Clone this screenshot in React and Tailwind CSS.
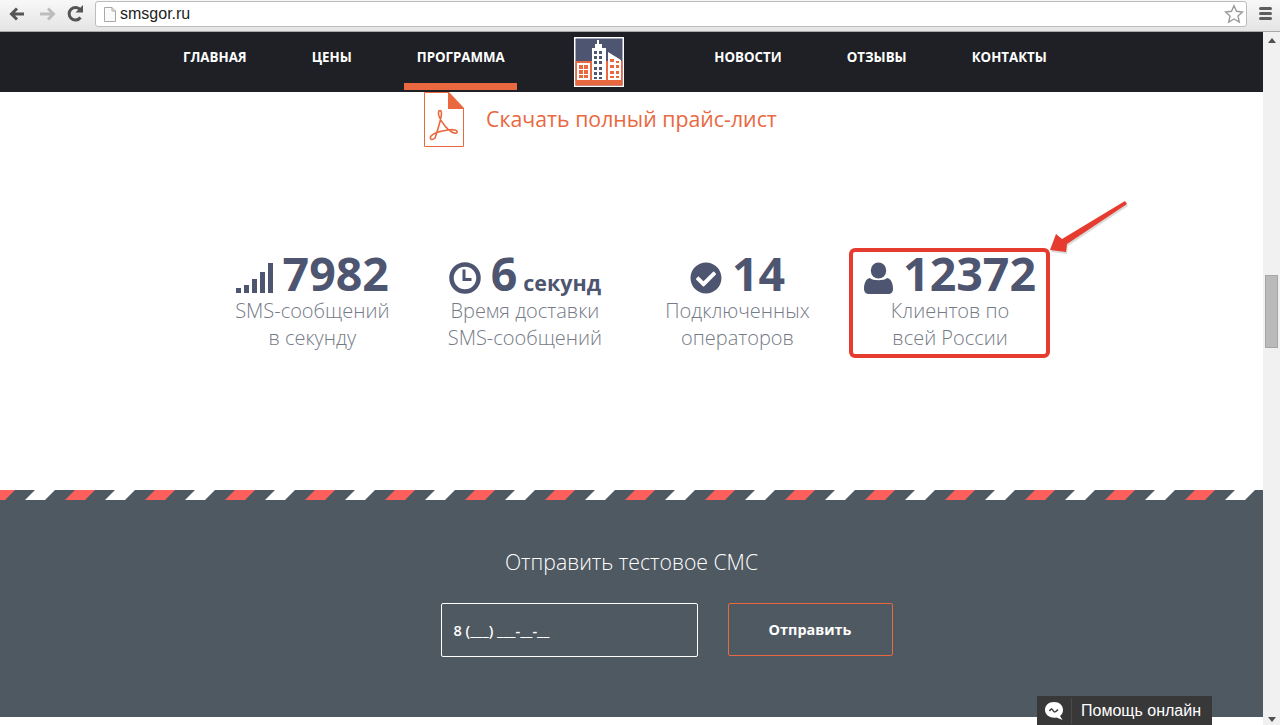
import { FaCheckCircle } from "react-icons/fa";

function Toolbar() {
  return (
    <div className="flex h-8 items-start border-b border-[#a9a9a9] bg-gradient-to-b from-[#f8f8f8] to-[#e4e4e4]">
      <div className="flex h-[26px] w-[95px] items-center">
        <svg width="95" height="26" viewBox="0 0 95 26" fill="none">
          <path d="M24 14H12M17 8.5L11.5 14L17 19.5" stroke="#555" strokeWidth="3" />
          <path d="M40 14H53M48 8.5L53.5 14L48 19.5" stroke="#bdbdbd" strokeWidth="3" />
          <path d="M80.5 17.5A6.3 6.3 0 1 1 80.5 10" stroke="#555" strokeWidth="3" />
          <path d="M75.5 12.5L83 12.5L83 5Z" fill="#555" />
        </svg>
      </div>
      <div className="mt-px flex h-[26px] w-[1152px] items-center rounded-[3px] border border-[#bcbcbc] bg-white pl-[7px] pr-[2px]">
        <svg width="14" height="17" viewBox="0 0 14 17" fill="none">
          <path d="M1.5 1.5H9L12.5 5V15.5H1.5Z" fill="#fafafa" stroke="#a8a8a8" />
          <path d="M9 1.5V5H12.5" stroke="#a8a8a8" />
        </svg>
        <span className="ml-[3px] font-['Liberation_Sans',sans-serif] text-base leading-none text-[#222]">smsgor.ru</span>
        <svg className="ml-auto" width="20" height="20" viewBox="0 0 20 20" fill="none">
          <path d="M10 1.8L12.5 7.3L18.5 8L14 12L15.3 18L10 15L4.7 18L6 12L1.5 8L7.5 7.3Z" fill="#fff" stroke="#9a9a9a" strokeWidth="1.4" />
        </svg>
      </div>
      <div className="ml-[12px] mt-[7px] flex w-[13px] flex-col gap-[2px]">
        <div className="h-[3px] rounded-sm bg-[#5e5e5e]" />
        <div className="h-[3px] rounded-sm bg-[#5e5e5e]" />
        <div className="h-[3px] rounded-sm bg-[#5e5e5e]" />
      </div>
    </div>
  );
}

function NavLink({ label, active }) {
  return (
    <a
      className={
        "flex h-[58px] items-center self-start border-b-[7px] px-[12.5px] text-[13.3px] font-bold uppercase text-white " +
        (active ? "border-[#e9683f]" : "border-transparent")
      }
    >
      {label}
    </a>
  );
}

function Logo() {
  return (
    <svg className="shrink-0" width="50" height="50" viewBox="0 0 50 50">
      <rect width="50" height="50" fill="#fff" />
      <rect x="1.5" y="1.5" width="47" height="47" fill="#4d5570" />
      <rect x="1.5" y="24" width="47" height="24.5" fill="#e9683f" />
      <rect x="3" y="26" width="13" height="17" fill="#fff" />
      <path d="M5 28h4v4H5zM10 28h4v4h-4zM5 33h4v4H5zM10 33h4v4h-4zM5 38h4v3H5zM10 38h4v3h-4z" fill="#e9683f" />
      <path d="M18 11H21V7H23V3H25V7H28V11H32V43H18Z" fill="#fff" />
      <path d="M20 14h3v3h-3zM25 14h3v3h-3zM20 19h3v3h-3zM25 19h3v3h-3zM20 24h3v3h-3zM25 24h3v3h-3zM20 30h3v3h-3zM25 30h3v3h-3zM20 35h3v3h-3zM25 35h3v3h-3zM20 40h3v2h-3zM25 40h3v2h-3z" fill="#4d5570" />
      <path d="M34 15L47 23V43H34Z" fill="#fff" />
      <path d="M36 22h4v3h-4zM42 24h3v2h-3zM36 28h4v3h-4zM42 28h3v3h-3zM36 34h4v3h-4zM42 34h3v3h-3zM36 39h4v2h-4zM42 39h3v2h-3z" fill="#e9683f" />
    </svg>
  );
}

function PdfIcon() {
  return (
    <svg className="shrink-0" width="41" height="55" viewBox="0 0 41 55" fill="none">
      <path d="M24 0.5H0.5V54.5H39.5V16" stroke="#e9683f" />
      <path d="M24 0H25L40 16V17H24Z" fill="#e9683f" />
      <path
        d="M11 46C8 49 5 47 7 44C10 41 16 39 24 38C29 37 34 38 33 40.500C31 43 25 39 21 34C17 29 14 23 14.500 20C15 18 17.500 18 17.500 21C17.500 26 14 37 11 46Z"
        stroke="#e9683f"
        strokeWidth="1.6"
      />
    </svg>
  );
}

function SignalIcon() {
  return (
    <svg width="37" height="32" viewBox="0 0 37 32" fill="#4d5570">
      <rect x="0" y="26" width="5" height="5" />
      <rect x="8" y="23" width="5" height="8" />
      <rect x="16" y="17" width="5" height="14" />
      <rect x="24" y="10" width="5" height="21" />
      <rect x="32" y="1" width="5" height="30" />
    </svg>
  );
}

function ClockIcon() {
  return (
    <svg width="32" height="32" viewBox="0 0 32 32" fill="none">
      <circle cx="16" cy="16" r="13.500" stroke="#4d5570" strokeWidth="4.500" />
      <path d="M15 7.500V17.500H22.500" stroke="#4d5570" strokeWidth="3" />
    </svg>
  );
}

function UserIcon() {
  return (
    <svg width="29" height="32" viewBox="0 0 30 32" preserveAspectRatio="none" fill="#4d5570">
      <circle cx="15" cy="8.500" r="8" />
      <path d="M6 16C9 19 21 19 24 16C28 17 30 21 30 27C30 30 28 32 25 32H5C2 32 0 30 0 27C0 21 2 17 6 16Z" />
    </svg>
  );
}

function Stat({ icon, value, unit, lines }) {
  return (
    <div className="flex w-[212.6px] flex-col items-center">
      <div className="flex h-[48px] items-center gap-[10px] text-[46.5px] font-bold leading-[46px] text-[#4d5570]">
        <span className="mt-[10px] flex">{icon}</span>
        <span className="flex items-baseline gap-[6px]">
          {value}
          {unit && <span className="text-[21.5px] leading-none">{unit}</span>}
        </span>
      </div>
      <p className="text-center text-xl font-light leading-[27px] text-[#757b86]">
        {lines[0]}
        <br />
        {lines[1]}
      </p>
    </div>
  );
}

function Annotation() {
  return (
    <>
      <div className="absolute left-[849px] top-[248px] h-[110px] w-[201px] rounded-[6px] border-[4px] border-[#e63c30]" />
      <svg className="absolute left-[1045px] top-[195px]" width="90" height="65" viewBox="0 0 90 65">
        <path d="M5 55L11 39L17 44L80 6L82 9L22 49L21 57Z" fill="#b8b8b8" opacity="0.5" transform="translate(1 2)" />
        <path d="M5 55L11 39L17 44L80 6L82 9L22 49L21 57Z" fill="#e63c30" />
      </svg>
    </>
  );
}

function Stripes() {
  return (
    <svg className="block" width="1263" height="10">
      <defs>
        <pattern id="stripes" width="80" height="10" patternUnits="userSpaceOnUse">
          <rect width="80" height="10" fill="#4f5962" />
          <polygon points="35,0 55,0 45,10 25,10" fill="#fff" />
          <polygon points="75,0 95,0 85,10 65,10" fill="#ff5f5b" />
          <polygon points="-5,0 15,0 5,10 -15,10" fill="#ff5f5b" />
        </pattern>
      </defs>
      <rect width="1263" height="10" fill="url(#stripes)" />
    </svg>
  );
}

function Scrollbar() {
  return (
    <div className="flex h-[693px] w-[17px] flex-col items-center bg-[#f1f1f1] pt-[6px]">
      <div className="h-0 w-0 border-x-[4px] border-b-[5px] border-x-transparent border-b-[#505050]" />
      <div className="mt-[232px] h-[73px] w-[13px] border border-[#a6a6a6] bg-[#bababa]" />
      <div className="mt-[369px] h-0 w-0 border-x-[4px] border-t-[5px] border-x-transparent border-t-[#505050]" />
    </div>
  );
}

export default function App() {
  return (
    <div className="relative h-[725px] w-[1280px] overflow-hidden bg-white font-['Open_Sans',sans-serif]">
      <Toolbar />
      <div className="flex">
        <div className="w-[1263px]">
          <nav className="flex h-[60px] items-center bg-[#1e2025] pl-[170.5px]">
            <NavLink label="Главная" />
            <div className="w-10" />
            <NavLink label="Цены" />
            <div className="w-10" />
            <NavLink label="Программа" active />
            <div className="w-[57px]" />
            <Logo />
            <div className="w-[77.5px]" />
            <NavLink label="Новости" />
            <div className="w-10" />
            <NavLink label="Отзывы" />
            <div className="w-10" />
            <NavLink label="Контакты" />
          </nav>

          <section className="h-[398px]">
            <a className="flex items-center gap-[21px] pl-[424px]">
              <PdfIcon />
              <span className="pb-[2px] text-[21.3px] text-[#e9683f]">Скачать полный прайс-лист</span>
            </a>
            <div className="mt-[102px] flex pl-[206px]">
              <Stat icon={<SignalIcon />} value="7982" lines={["SMS-сообщений", "в секунду"]} />
              <Stat icon={<ClockIcon />} value="6" unit="секунд" lines={["Время доставки", "SMS-сообщений"]} />
              <Stat icon={<FaCheckCircle className="text-[32px]" />} value="14" lines={["Подключенных", "операторов"]} />
              <Stat icon={<UserIcon />} value="12372" lines={["Клиентов по", "всей России"]} />
            </div>
          </section>

          <Stripes />

          <section className="flex h-[217px] flex-col items-center bg-[#4f5962] pt-[48px]">
            <h2 className="text-[21.2px] font-light leading-[28px] text-white">Отправить тестовое СМС</h2>
            <div className="ml-[70px] mt-[27px] flex gap-[30px]">
              <div className="flex h-[54px] w-[257px] items-center rounded-[2px] border border-white pl-3 pt-px text-[14.5px] font-semibold text-white">
                8 (___) ___-__-__
              </div>
              <button className="h-[53px] w-[165px] rounded-[2px] border border-[#e9683f] text-[14.4px] font-bold text-white">
                Отправить
              </button>
            </div>
          </section>
        </div>
        <Scrollbar />
      </div>

      <Annotation />

      <div className="absolute bottom-0 left-[1037px] flex h-[29px] w-[175px] items-center bg-[#383838]">
        <svg className="ml-[6px]" width="22" height="22" viewBox="0 0 22 22" fill="none">
          <path d="M11 2C16.500 2 20 5.500 20 10C20 13 18.500 15 17 16L19.500 20L13.500 17.500C8 18.500 2 15.500 2 10C2 5.500 5.500 2 11 2Z" fill="#fff" />
          <path d="M6.500 11C8 8.500 9 8.500 10 10.500C11 12.500 12.500 12.500 15 9.500" stroke="#383838" strokeWidth="1.500" />
        </svg>
        <div className="ml-[6px] h-[26px] w-px bg-[#4a4a4a]" />
        <span className="ml-[9px] font-['Liberation_Sans',sans-serif] text-base text-white">Помощь онлайн</span>
      </div>
    </div>
  );
}
